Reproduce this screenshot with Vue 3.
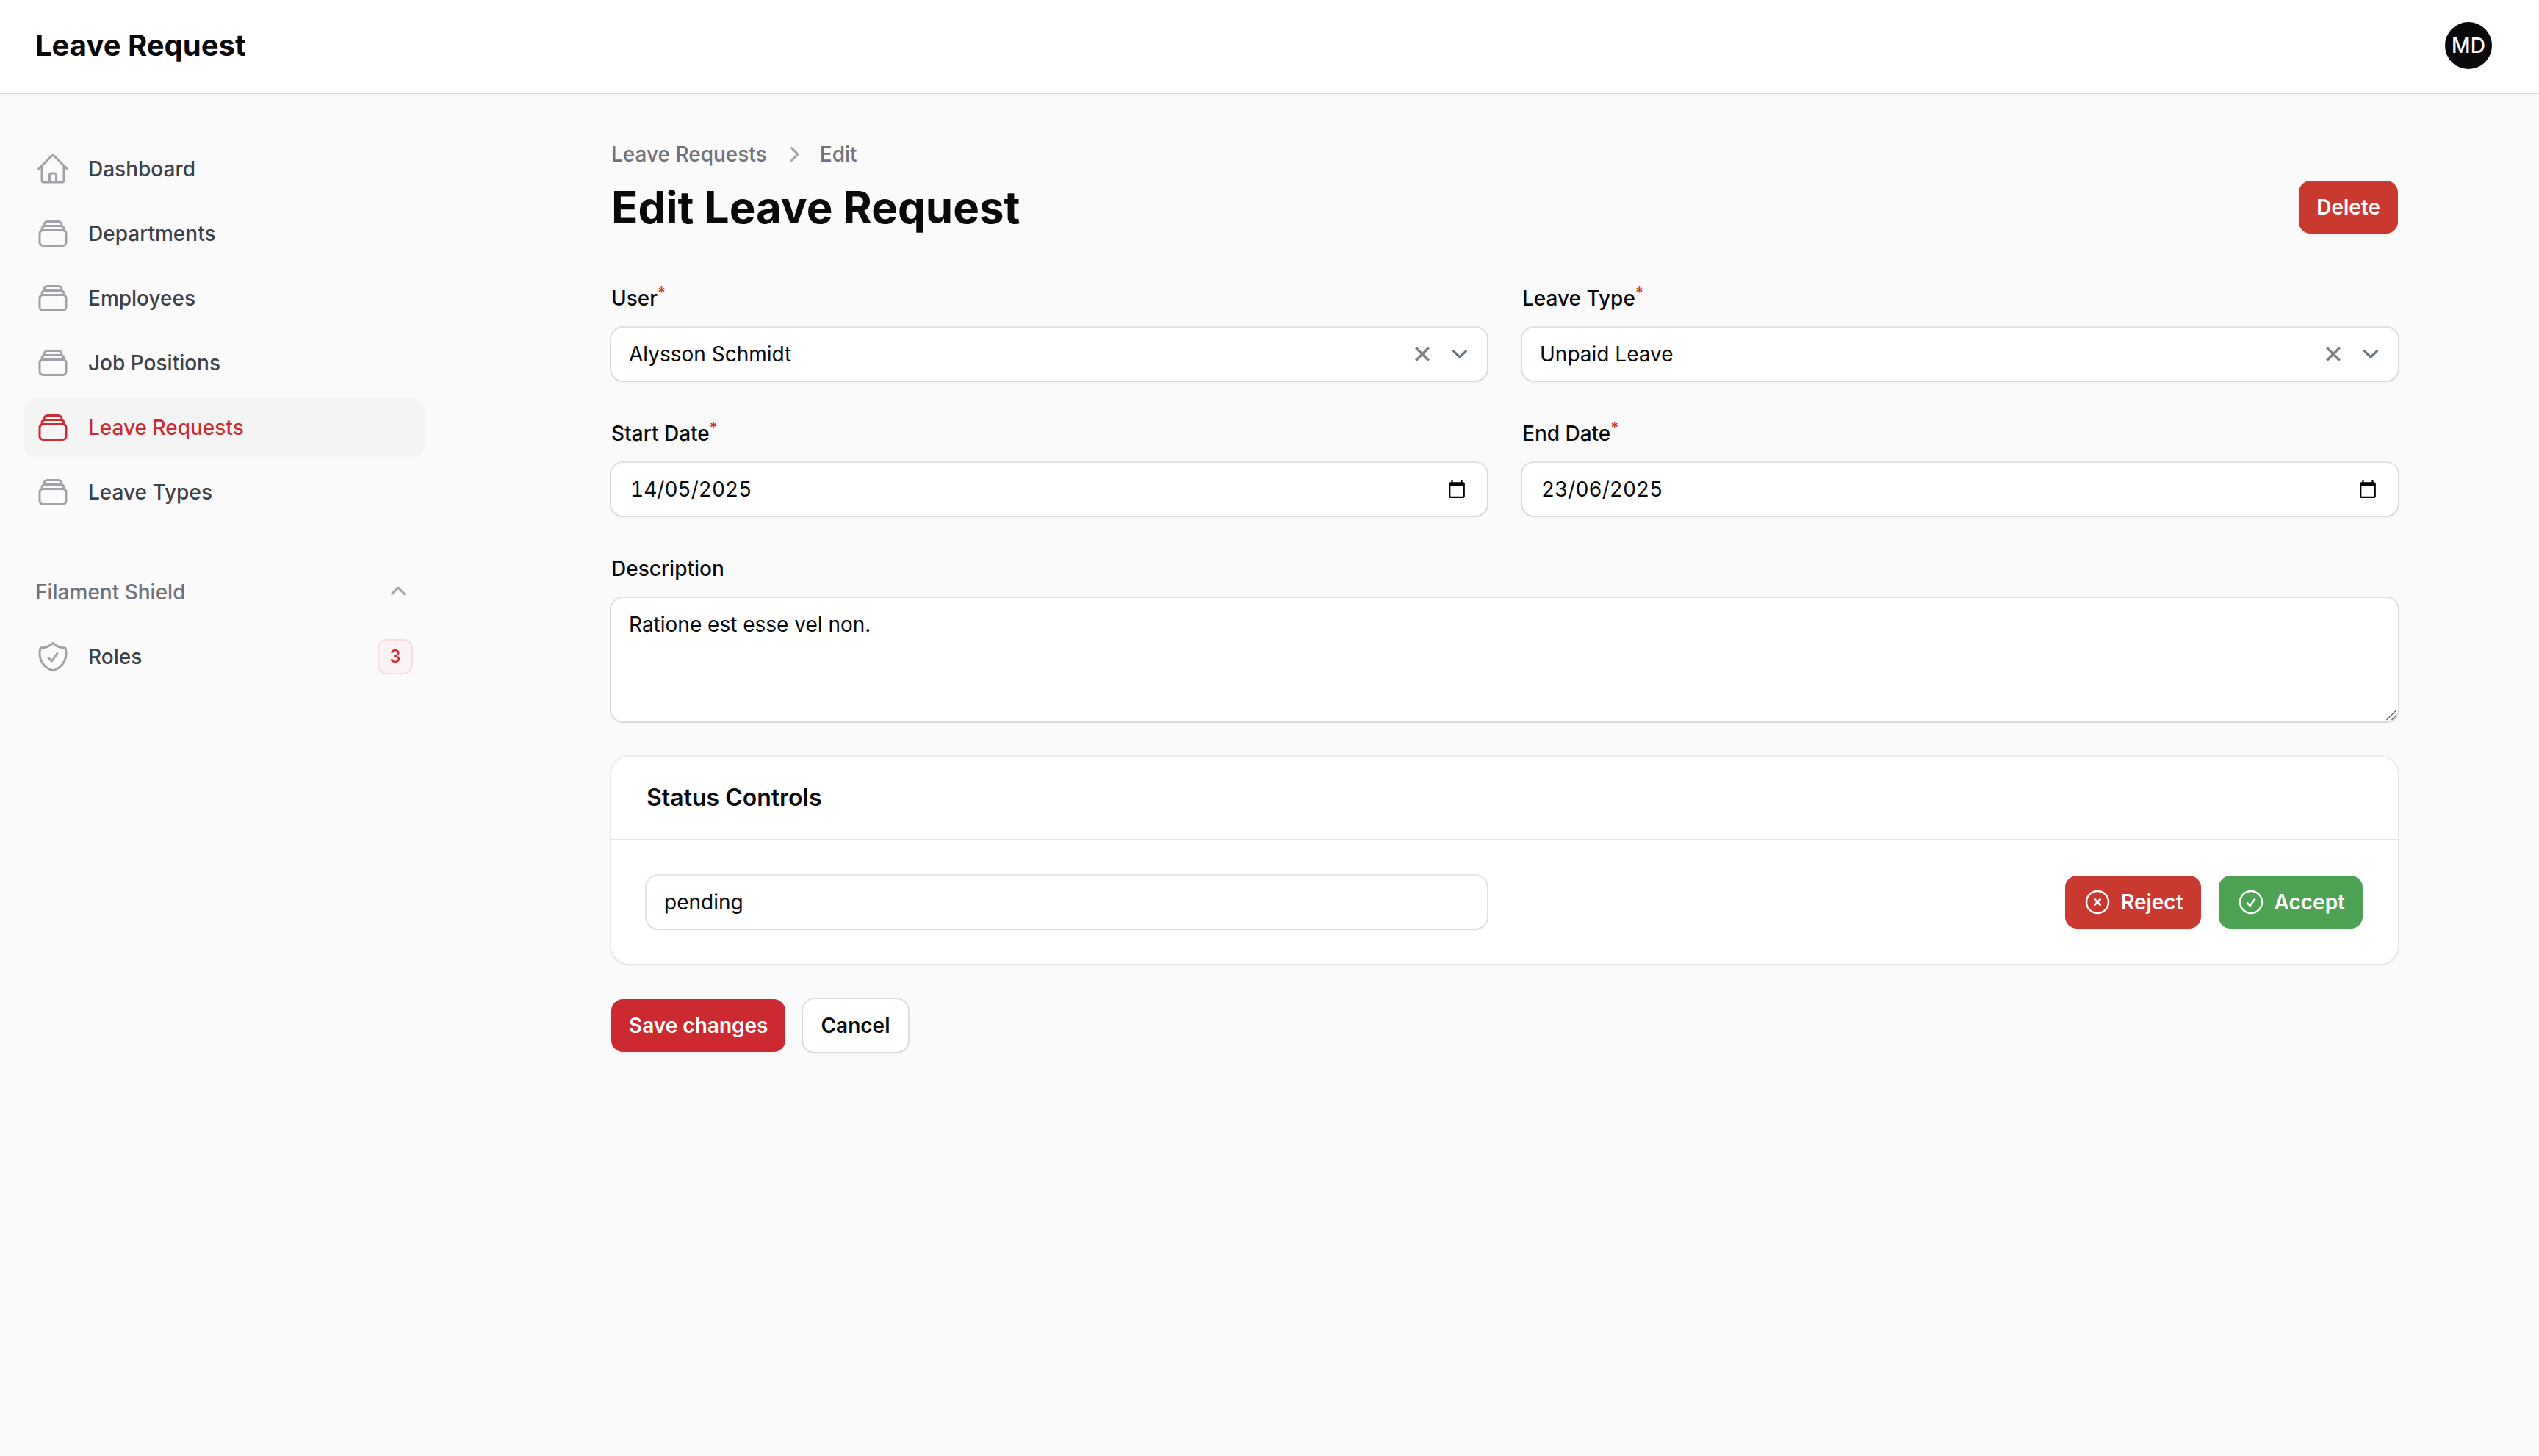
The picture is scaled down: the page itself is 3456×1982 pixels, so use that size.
<script setup>
import { ref } from 'vue'

const navItems = [
  { label: 'Dashboard', icon: 'home' },
  { label: 'Departments', icon: 'stack' },
  { label: 'Employees', icon: 'stack' },
  { label: 'Job Positions', icon: 'stack' },
  { label: 'Leave Requests', icon: 'stack', active: true },
  { label: 'Leave Types', icon: 'stack' },
]

const iconPaths = {
  home: 'm2.25 12 8.954-8.955c.44-.439 1.152-.439 1.591 0L21.75 12M4.5 9.75v10.125c0 .621.504 1.125 1.125 1.125H9.75v-4.875c0-.621.504-1.125 1.125-1.125h2.25c.621 0 1.125.504 1.125 1.125V21h4.125c.621 0 1.125-.504 1.125-1.125V9.75M8.25 21h8.25',
  stack: 'M6 6.878V6a2.25 2.25 0 0 1 2.25-2.25h7.5A2.25 2.25 0 0 1 18 6v.878m-12 0c.235-.083.487-.128.75-.128h10.5c.263 0 .515.045.75.128m-12 0A2.25 2.25 0 0 0 4.5 9v.878m13.5-3A2.25 2.25 0 0 1 19.5 9v.878m0 0a2.246 2.246 0 0 0-.75-.128H5.25c-.263 0-.515.045-.75.128m15 0A2.25 2.25 0 0 1 21 12v6a2.25 2.25 0 0 1-2.25 2.25H5.25A2.25 2.25 0 0 1 3 18v-6c0-.98.626-1.813 1.5-2.122',
}

const selects = ref([
  { id: 'user', label: 'User', value: 'Alysson Schmidt' },
  { id: 'leave-type', label: 'Leave Type', value: 'Unpaid Leave' },
])
const dates = ref([
  { id: 'start-date', label: 'Start Date', value: '14/05/2025' },
  { id: 'end-date', label: 'End Date', value: '23/06/2025' },
])
const description = ref('Ratione est esse vel non.')
const status = ref('pending')
</script>

<template>
  <div class="page">
    <header class="topbar">
      <a href="#" class="brand">Leave Request</a>
      <button type="button" class="avatar" aria-label="User menu">MD</button>
    </header>

    <div class="layout">
      <nav class="sidebar">
        <ul class="nav-list">
          <li v-for="item in navItems" :key="item.label">
            <a href="#" class="nav-item" :class="{ active: item.active }">
              <svg class="nav-icon" viewBox="0 0 24 24" aria-hidden="true"><path :d="iconPaths[item.icon]" /></svg>
              <span>{{ item.label }}</span>
            </a>
          </li>
        </ul>

        <div class="nav-group">
          <button type="button" class="group-head">
            <span>Filament Shield</span>
            <svg class="mini-icon" viewBox="0 0 20 20" aria-hidden="true">
              <path d="M9.47 6.47a.75.75 0 0 1 1.06 0l4.25 4.25a.75.75 0 1 1-1.06 1.06L10 8.06l-3.72 3.72a.75.75 0 0 1-1.06-1.06l4.25-4.25Z" />
            </svg>
          </button>
          <a href="#" class="nav-item">
            <svg class="nav-icon" viewBox="0 0 24 24" aria-hidden="true">
              <path d="M9 12.75 11.25 15 15 9.75m-3-7.036A11.959 11.959 0 0 1 3.598 6 11.99 11.99 0 0 0 3 9.749c0 5.592 3.824 10.29 9 11.623 5.176-1.332 9-6.03 9-11.622 0-1.31-.21-2.571-.598-3.751h-.152c-3.196 0-6.1-1.248-8.25-3.285Z" />
            </svg>
            <span>Roles</span>
            <span class="badge">3</span>
          </a>
        </div>
      </nav>

      <main class="content">
        <div class="page-head">
          <div class="titles">
            <nav class="breadcrumbs" aria-label="Breadcrumb">
              <a href="#">Leave Requests</a>
              <svg class="mini-icon" viewBox="0 0 20 20" aria-hidden="true">
                <path d="M8.22 5.22a.75.75 0 0 1 1.06 0l4.25 4.25a.75.75 0 0 1 0 1.06l-4.25 4.25a.75.75 0 0 1-1.06-1.06L11.94 10 8.22 6.28a.75.75 0 0 1 0-1.06Z" />
              </svg>
              <a href="#">Edit</a>
            </nav>
            <h1>Edit Leave Request</h1>
          </div>
          <button type="button" class="btn danger">Delete</button>
        </div>

        <form class="form" @submit.prevent>
          <div v-for="field in selects" :key="field.id" class="field">
            <label :for="field.id">{{ field.label }}<sup>*</sup></label>
            <div class="control">
              <select :id="field.id" v-model="field.value" class="input select">
                <option>{{ field.value }}</option>
              </select>
              <div class="select-tools">
                <button type="button" class="clear" aria-label="Clear">
                  <svg viewBox="0 0 21 21" aria-hidden="true">
                    <path d="M2.592.044l18.364 18.364-2.548 2.548L.044 2.592z" />
                    <path d="M0 18.364L18.364 0l2.548 2.548L2.548 20.912z" />
                  </svg>
                </button>
                <svg class="caret" viewBox="0 0 20 20" aria-hidden="true"><path d="m6 8 4 4 4-4" /></svg>
              </div>
            </div>
          </div>

          <div v-for="field in dates" :key="field.id" class="field">
            <label :for="field.id">{{ field.label }}<sup>*</sup></label>
            <div class="control input date">
              <input :id="field.id" v-model="field.value" type="text" />
              <button type="button" class="picker" aria-label="Open calendar">
                <svg viewBox="0 0 24 24" aria-hidden="true">
                  <path d="M20 3h-1V1h-2v2H7V1H5v2H4c-1.1 0-2 .9-2 2v16c0 1.1.9 2 2 2h16c1.1 0 2-.9 2-2V5c0-1.1-.9-2-2-2zm0 18H4V8h16v13z" />
                </svg>
              </button>
            </div>
          </div>

          <div class="field wide">
            <label for="description">Description</label>
            <div class="control">
              <textarea id="description" v-model="description" class="input" rows="3"></textarea>
              <svg class="grip" viewBox="0 0 16 16" aria-hidden="true"><path d="M1.5 15 14.5 2M8.5 15 14.5 9" /></svg>
            </div>
          </div>

          <section class="card wide">
            <h2>Status Controls</h2>
            <div class="card-body">
              <input v-model="status" class="input" type="text" aria-label="Status" readonly />
              <div class="actions end">
                <button type="button" class="btn danger">
                  <svg viewBox="0 0 24 24" aria-hidden="true"><path d="m9.75 9.75 4.5 4.5m0-4.5-4.5 4.5M21 12a9 9 0 1 1-18 0 9 9 0 0 1 18 0Z" /></svg>
                  <span>Reject</span>
                </button>
                <button type="button" class="btn success">
                  <svg viewBox="0 0 24 24" aria-hidden="true"><path d="M9 12.75 11.25 15 15 9.75M21 12a9 9 0 1 1-18 0 9 9 0 0 1 18 0Z" /></svg>
                  <span>Accept</span>
                </button>
              </div>
            </div>
          </section>

          <div class="actions wide">
            <button type="submit" class="btn primary">Save changes</button>
            <button type="button" class="btn plain">Cancel</button>
          </div>
        </form>
      </main>
    </div>
  </div>
</template>

<style>
body {
  background: #fafafa;
}
</style>

<style scoped>
* {
  box-sizing: border-box;
}

.page {
  min-height: 100vh;
  background: #fafafa;
  color: #09090b;
  font-family: Inter, "Liberation Sans", sans-serif;
  font-size: 28px;
  line-height: 40px;
}

a {
  color: inherit;
  text-decoration: none;
}

button,
input,
select,
textarea {
  margin: 0;
  border: 0;
  padding: 0;
  background: none;
  color: inherit;
  font: inherit;
}

.topbar {
  display: flex;
  align-items: center;
  justify-content: space-between;
  padding: 30px 64px 32px 48px;
  background: #fff;
  box-shadow: 0 0 0 2px rgba(9, 9, 11, 0.1), 0 2px 4px rgba(0, 0, 0, 0.05);
}

.brand {
  font-size: 40px;
  font-weight: 700;
}

.avatar {
  width: 64px;
  height: 64px;
  border-radius: 50%;
  background: #09090b;
  color: #fff;
  font-weight: 500;
}

.layout {
  display: flex;
}

.sidebar {
  flex: 0 0 640px;
  display: flex;
  flex-direction: column;
  gap: 56px;
  padding: 64px 62px 64px 32px;
  font-weight: 500;
}

.nav-list,
.nav-group {
  display: flex;
  flex-direction: column;
  gap: 8px;
  margin: 0;
  padding: 0;
  list-style: none;
}

.nav-item {
  display: flex;
  align-items: center;
  gap: 24px;
  height: 80px;
  padding: 0 16px;
  border-radius: 16px;
  color: #3f3f46;
}

.nav-item.active {
  background: #f4f4f5;
  color: #cd2a31;
}

.nav-icon {
  width: 48px;
  height: 48px;
  fill: none;
  stroke: #a1a1aa;
  stroke-width: 1.5;
  stroke-linecap: round;
  stroke-linejoin: round;
}

.active .nav-icon {
  stroke: currentColor;
}

.badge {
  min-width: 48px;
  margin-left: auto;
  padding: 8px 0;
  border-radius: 12px;
  background: #fdf2f3;
  box-shadow: inset 0 0 0 2px rgba(205, 42, 49, 0.1);
  color: #cd2a31;
  font-size: 24px;
  line-height: 32px;
  text-align: center;
}

.group-head {
  display: flex;
  align-items: center;
  justify-content: space-between;
  height: 80px;
  padding: 0 16px;
  color: #71717a;
}

.mini-icon {
  width: 40px;
  height: 40px;
  fill: #a1a1aa;
}

.content {
  flex: 1;
  display: flex;
  flex-direction: column;
  gap: 64px;
  max-width: 2560px;
  margin: 0 auto;
  padding: 64px;
}

.page-head {
  display: flex;
  align-items: flex-end;
  justify-content: space-between;
}

.breadcrumbs {
  display: flex;
  align-items: center;
  gap: 16px;
  margin-bottom: 16px;
  color: #71717a;
  font-weight: 500;
}

h1 {
  margin: 0;
  font-size: 60px;
  font-weight: 700;
  line-height: 72px;
}

.form {
  display: grid;
  grid-template-columns: 1fr 1fr;
  gap: 48px;
}

.wide {
  grid-column: 1 / -1;
}

.field {
  display: flex;
  flex-direction: column;
  gap: 16px;
}

label {
  height: 48px;
  font-weight: 500;
  line-height: 48px;
}

sup {
  position: relative;
  top: -10px;
  color: #c93930;
  font-size: 21px;
  line-height: 0;
  vertical-align: baseline;
}

.control {
  position: relative;
}

.input {
  display: block;
  width: 100%;
  height: 72px;
  padding: 0 24px;
  border-radius: 16px;
  outline: none;
  background: #fff;
  box-shadow: 0 0 0 2px rgba(9, 9, 11, 0.1), 0 2px 4px rgba(0, 0, 0, 0.05);
}

.select {
  appearance: none;
}

.select-tools {
  position: absolute;
  top: 0;
  right: 16px;
  bottom: 0;
  display: flex;
  align-items: center;
  gap: 10px;
  pointer-events: none;
}

.clear {
  display: flex;
  padding: 10px;
  pointer-events: auto;
}

.clear svg {
  width: 20px;
  height: 20px;
  fill: #808080;
}

.caret {
  width: 42px;
  height: 42px;
  fill: none;
  stroke: #6b7280;
  stroke-width: 1.5;
  stroke-linecap: round;
  stroke-linejoin: round;
}

.input.date {
  display: flex;
  align-items: center;
  padding: 0 28px 0 26px;
}

.date input {
  flex: 1;
  outline: none;
  font-variant-numeric: tabular-nums;
}

.picker {
  display: flex;
}

.picker svg {
  width: 26px;
  height: 26px;
}

textarea.input {
  height: 168px;
  padding: 12px 24px;
  line-height: 48px;
  resize: none;
}

.grip {
  position: absolute;
  right: 1px;
  bottom: 1px;
  width: 16px;
  height: 16px;
  fill: none;
  stroke: #6b6b6b;
  stroke-width: 1.5;
}

.card {
  border-radius: 24px;
  background: #fff;
  box-shadow: 0 0 0 2px rgba(9, 9, 11, 0.05), 0 2px 4px rgba(0, 0, 0, 0.05);
}

h2 {
  margin: 0;
  padding: 32px 48px;
  font-size: 32px;
  font-weight: 600;
  line-height: 48px;
}

.card-body {
  display: grid;
  grid-template-columns: 1fr 1fr;
  gap: 48px;
  padding: 48px;
  border-top: 2px solid #e4e4e5;
}

.actions {
  display: flex;
  gap: 24px;
}

.end {
  justify-content: flex-end;
}

.btn {
  display: flex;
  align-items: center;
  gap: 12px;
  height: 72px;
  padding: 0 24px;
  border-radius: 16px;
  box-shadow: 0 2px 4px rgba(0, 0, 0, 0.05);
  color: #fff;
  font-weight: 600;
}

.btn svg {
  width: 40px;
  height: 40px;
  fill: none;
  stroke: currentColor;
  stroke-width: 1.5;
  stroke-linecap: round;
  stroke-linejoin: round;
}

.danger {
  background: #c93930;
}

.success {
  background: #4ea254;
}

.primary {
  background: #cc2a30;
}

.plain {
  background: #fff;
  box-shadow: 0 0 0 2px rgba(9, 9, 11, 0.1), 0 2px 4px rgba(0, 0, 0, 0.05);
  color: #09090b;
}
</style>
